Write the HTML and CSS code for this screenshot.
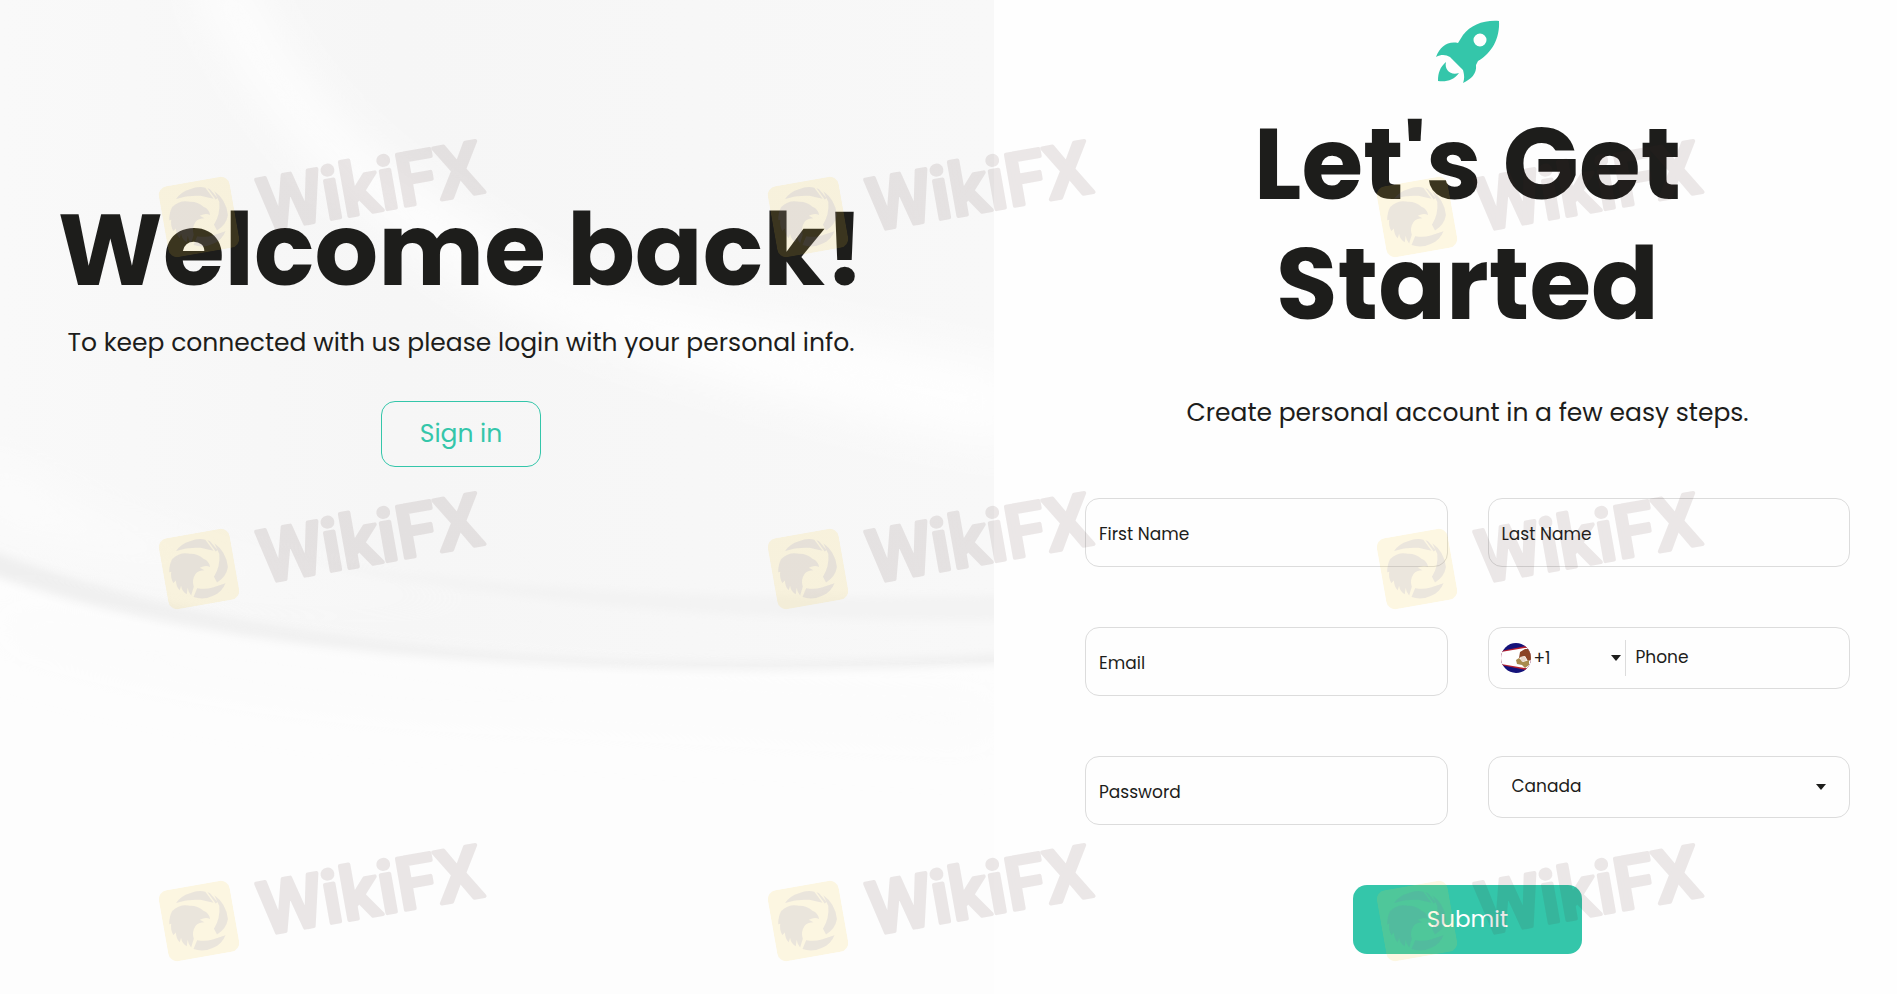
FILE: index.html
```html
<!DOCTYPE html>
<html lang="en">
<head>
  <meta charset="UTF-8">
  <meta name="viewport" content="width=device-width, initial-scale=1.0">
  <title>Create account</title>
  <link rel="stylesheet" href="styles.css">
</head>
<body>
  <!-- Shared watermark logo -->
  <svg class="symbols" aria-hidden="true">
    <symbol id="eagle" viewBox="0 0 70 70">
      <rect width="70" height="70" rx="9" fill="#f5cf3c" fill-opacity="0.14"/>
      <g fill="#6c6cba" fill-opacity="0.12">
        <path d="M16 14 Q22 8 31 7 Q39 5 46 8 L52 20 L40 15 Q28 12 16 14 Z"/>
        <path d="M48 9 L50 10 L56 20 L54 21 Z"/>
        <path d="M54 13 Q64 23 63 38 Q60 47 50 51 L48 45 Q56 36 57 24 Z"/>
        <path d="M58 53 Q53 61 44 63 Q34 66 25 61 L30 53 Q38 56 45 55 Z"/>
        <path d="M11 21 Q20 15 29 19 Q36 20 41 26 Q46 29 46 35 Q42 32 36 34 L40 37 Q34 36 31 39 Q26 44 27 51 L23 59 Q21 56 21 51 L19 57 Q15 54 15 48 L13 52 Q10 48 11 42 L8 44 Q6 38 8 33 L6 33 Q7 26 11 21 Z"/>
      </g>
    </symbol>
  </svg>

  <main class="page">
    <section class="welcome">
      <svg class="waves" viewBox="0 0 994 994" preserveAspectRatio="none" aria-hidden="true">
        <defs>
          <linearGradient id="sky" x1="0" y1="0" x2="1" y2="0">
            <stop offset="0" stop-color="#f9f9f9"/>
            <stop offset="0.4" stop-color="#f6f6f6"/>
            <stop offset="1" stop-color="#f8f8f8"/>
          </linearGradient>
          <filter id="soft" x="-20%" y="-50%" width="140%" height="200%">
            <feGaussianBlur stdDeviation="24"/>
          </filter>
          <filter id="edge" x="-10%" y="-50%" width="120%" height="200%">
            <feGaussianBlur stdDeviation="4"/>
          </filter>
        </defs>
        <rect width="994" height="994" fill="#fdfdfd"/>
        <path d="M0 0 H994 V662 Q830 669 638 665 C446 659 190 638 0 564 Z" fill="url(#sky)"/>
        <path d="M190 -30 L240 -30 Q300 110 420 190 L560 280 L1020 370 V450 Q700 390 500 300 Q270 170 190 -30 Z" fill="#fefefe" filter="url(#soft)"/>
        <path d="M-20 450 Q180 590 520 600 Q300 610 -20 520 Z" fill="#fcfcfc" filter="url(#soft)"/>
        <path d="M300 560 Q600 605 1010 595 V620 Q600 625 300 560 Z" fill="#f3f3f3" filter="url(#edge)"/>
        <path d="M-10 550 C190 628 446 654 638 660 Q830 664 1010 654 V663 Q830 673 638 669 C446 663 190 648 -10 574 Z" fill="#efefef" filter="url(#edge)"/>
        <path d="M0 636 Q200 700 500 715 T994 740 V700 Q400 690 0 610 Z" fill="#fbfbfb" filter="url(#soft)"/>
      </svg>
      <div class="welcome-content">
        <h1>Welcome back!</h1>
        <p class="lead">To keep connected with us please login with your personal info.</p>
        <button type="button" class="btn btn-outline">Sign in</button>
      </div>
    </section>

    <section class="register">
      <svg class="rocket" viewBox="0 0 64 64" aria-hidden="true">
        <path fill="#34c6aa" fill-rule="evenodd" d="M63 1 C47 0 35 5 27 15 L22 23 C11 21 4 27 0 37 C6 34 10 35 14 37 L27 50 C28 54 29 58 27 63 C35 59 41 54 40 45 L42 41 C56 33 64 18 63 1 Z M44 13.500 A6.500 6.500 0 1 1 44 26.500 A6.500 6.500 0 1 1 44 13.500 Z"/>
        <path fill="#34c6aa" d="M10 42 C4 47 2 53 2 61 C11 62 18 60 23 53 C15 56 8 50 10 42 Z"/>
      </svg>
      <h1>Let's Get Started</h1>
      <p class="lead">Create personal account in a few easy steps.</p>

      <form class="form">
        <div class="field text">
          <input type="text" id="firstName" placeholder=" ">
          <label for="firstName">First Name</label>
        </div>
        <div class="field text">
          <input type="text" id="lastName" placeholder=" ">
          <label for="lastName">Last Name</label>
        </div>
        <div class="field text">
          <input type="email" id="email" placeholder=" ">
          <label for="email">Email</label>
        </div>
        <div class="field phone">
          <svg class="flag" viewBox="0 0 30 30" aria-hidden="true">
            <defs>
              <clipPath id="round"><circle cx="15" cy="15" r="15"/></clipPath>
            </defs>
            <g clip-path="url(#round)">
              <rect width="30" height="30" fill="#14127a"/>
              <path d="M0 8 L30 2 V28 L0 22 Z" fill="#b5202f"/>
              <path d="M0 9 L30 4 V26 L0 21 Z" fill="#fff"/>
              <path d="M19 9 L24 6 L30 6 V17 L27 18 L24 13 L18 15 Z" fill="#8a4226"/>
              <path d="M15 17 L18 15 L22 19 L28 17 L28 22 L24 25 L21 22 L16 21 Z" fill="#a98b4e"/>
              <path d="M19 14 L23 13 L26 17 L21 19 Z" fill="#e9d8cc"/>
            </g>
          </svg>
          <div class="select code">
            <select id="code" aria-label="Country code">
              <option>+1</option>
              <option>+44</option>
            </select>
          </div>
          <div class="text number">
            <input type="tel" id="phone" placeholder=" ">
            <label for="phone">Phone</label>
          </div>
        </div>
        <div class="field text">
          <input type="password" id="password" placeholder=" ">
          <label for="password">Password</label>
        </div>
        <div class="field select country">
          <select id="country" aria-label="Country">
            <option>Canada</option>
            <option>United States</option>
          </select>
        </div>
        <button type="submit" class="btn btn-submit">Submit</button>
      </form>
    </section>
  </main>

  <!-- Watermark -->
  <div class="watermarks">
    <svg class="mark"><use href="#eagle" width="72" height="72"/><text x="97" y="61">WikiFX</text></svg>
    <svg class="mark"><use href="#eagle" width="72" height="72"/><text x="97" y="61">WikiFX</text></svg>
    <svg class="mark"><use href="#eagle" width="72" height="72"/><text x="97" y="61">WikiFX</text></svg>
    <svg class="mark"><use href="#eagle" width="72" height="72"/><text x="97" y="61">WikiFX</text></svg>
    <svg class="mark"><use href="#eagle" width="72" height="72"/><text x="97" y="61">WikiFX</text></svg>
    <svg class="mark"><use href="#eagle" width="72" height="72"/><text x="97" y="61">WikiFX</text></svg>
    <svg class="mark"><use href="#eagle" width="72" height="72"/><text x="97" y="61">WikiFX</text></svg>
    <svg class="mark"><use href="#eagle" width="72" height="72"/><text x="97" y="61">WikiFX</text></svg>
    <svg class="mark"><use href="#eagle" width="72" height="72"/><text x="97" y="61">WikiFX</text></svg>
  </div>
</body>
</html>
```
FILE: styles.css
```css
:root {
  --green: #34c6aa;
  --text: #1d1d1b;
  --border: #dcdcdc;
  --radius: 14px;
}

* {
  box-sizing: border-box;
}

body {
  margin: 0;
  position: relative;
  overflow-x: hidden;
  background: #fefefe;
  color: var(--text);
  font-family: Poppins, Inter, sans-serif;
}

input, select, button {
  font: inherit;
  color: inherit;
}

h1 {
  margin: 0;
  font-size: 100px;
  line-height: 120px;
  font-weight: 700;
}

.symbols {
  position: absolute;
  width: 0;
  height: 0;
}

.page {
  display: grid;
  grid-template-columns: minmax(0, 994fr) minmax(0, 903fr);
  min-height: 100vh;
}

/* Left side */
.welcome {
  position: relative;
  padding: 190px 132px 0 60px;
}

.waves {
  position: absolute;
  top: 0;
  left: 0;
  width: 100%;
  height: 100%;
}

.welcome-content {
  position: relative;
  display: flex;
  flex-direction: column;
  align-items: center;
  text-align: center;
}

.welcome-content h1 {
  white-space: nowrap;
}

.lead {
  margin: 0;
  font-size: 25px;
  line-height: 38px;
}

.welcome .lead {
  margin: 14px 0 39px;
  white-space: nowrap;
}

.btn {
  border-radius: var(--radius);
  cursor: pointer;
}

.btn-outline {
  width: 160px;
  height: 66px;
  background: none;
  border: 1px solid var(--green);
  color: var(--green);
  font-size: 25px;
}

/* Right side */
.register {
  display: flex;
  flex-direction: column;
  align-items: center;
  padding: 20px 47px 40px 91px;
  text-align: center;
}

.rocket {
  width: 64px;
  height: 64px;
}

.register h1 {
  max-width: 560px;
  margin: 20px 0 50px;
}

.form {
  display: grid;
  grid-template-columns: 1fr 1fr;
  column-gap: 40px;
  row-gap: 60px;
  align-items: start;
  width: 100%;
  margin-top: 66px;
  font-size: 17px;
  text-align: left;
}

.field {
  border: 1px solid var(--border);
  border-radius: var(--radius);
}

/* label lies over the empty input */
.text {
  display: grid;
  align-items: center;
}

.text input,
.text label {
  grid-area: 1 / 1;
}

.text input {
  width: 100%;
  height: 67px;
  padding: 2px 13px 0;
  border: none;
  background: none;
  outline: none;
}

.text label {
  padding: 2px 13px 0;
  pointer-events: none;
}

.text input:not(:placeholder-shown) + label {
  visibility: hidden;
}

.select {
  position: relative;
}

.select select {
  display: block;
  width: 100%;
  height: 60px;
  padding: 0 23px 2px;
  border: none;
  background: none;
  appearance: none;
  outline: none;
}

.select::after {
  content: "";
  position: absolute;
  top: 50%;
  right: 23px;
  margin-top: -3px;
  border: 5px solid transparent;
  border-top: 6px solid var(--text);
  border-bottom: none;
  pointer-events: none;
}

.phone {
  display: flex;
  align-items: center;
  height: 62px;
  padding-left: 12px;
}

.flag {
  flex: none;
  width: 30px;
  height: 30px;
}

.code {
  flex: none;
  width: 95px;
  border-right: 1px solid var(--border);
}

.code select {
  height: 36px;
  padding: 0 3px;
}

.code::after {
  right: 4px;
}

.number {
  flex: 1;
  min-width: 0;
}

.number input,
.number label {
  padding: 0 10px 2px;
}

.number input {
  height: 60px;
}

.btn-submit {
  grid-column: span 2;
  justify-self: center;
  width: 229px;
  height: 69px;
  padding-bottom: 3px;
  border: none;
  background: var(--green);
  color: #fff;
  font-size: 23px;
}

/* Watermark */
.watermarks {
  position: absolute;
  top: 0;
  left: 0;
  width: 100%;
  height: 100%;
  display: grid;
  grid-template-columns: repeat(3, 609px);
  grid-auto-rows: 352px;
  align-content: start;
  padding: 181px 0 0 163px;
  overflow: hidden;
  pointer-events: none;
}

.mark {
  width: 340px;
  height: 72px;
  overflow: visible;
  transform: rotate(-10deg);
  transform-origin: 36px 36px;
}

.mark text {
  font-family: Roboto, sans-serif;
  font-size: 73px;
  font-weight: 500;
  fill: #4a2828;
  stroke: #4a2828;
  stroke-width: 4px;
  stroke-linejoin: round;
  opacity: 0.1;
}
```
